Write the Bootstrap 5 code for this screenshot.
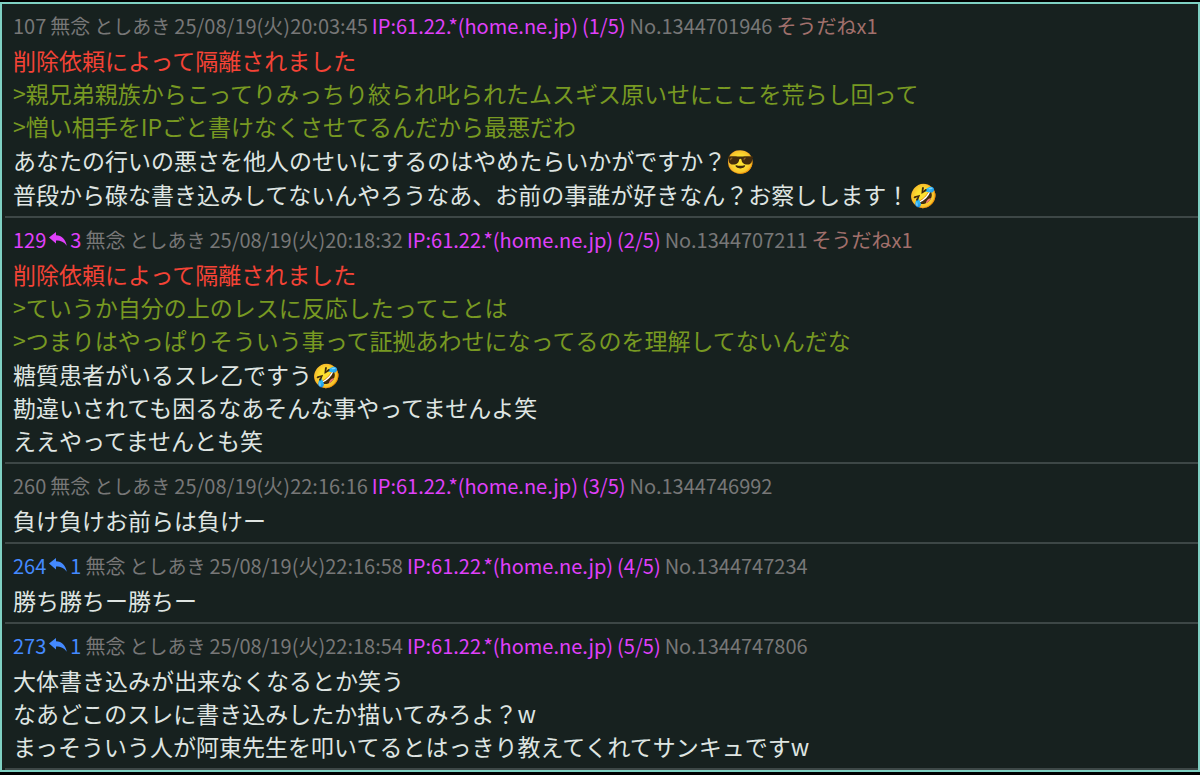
<!DOCTYPE html>
<html lang="ja" data-bs-theme="dark">
<head>
<meta charset="utf-8">
<meta name="viewport" content="width=device-width, initial-scale=1">
<title>レス一覧</title>
<link href="https://cdn.jsdelivr.net/npm/bootstrap@5.3.0/dist/css/bootstrap.min.css" rel="stylesheet">
<style>
  body { background: #000; font-family: "Noto Sans CJK JP", sans-serif; }
  .popup { margin: 2px 0 0; background: #17211f; border: 2px solid #7fd1c3; }
  .post { padding: 6px 8px 5px; margin-left: 3px; border-bottom: 2px solid #3d4746; }
  .post-head { column-gap: 4px; margin-bottom: 2px; font-size: 20px; line-height: 32px; color: #777; }
  .post-head a { text-decoration: none; }
  .post-text { font-size: 23px; line-height: 33px; color: #dfe5e2; }
  .with-emoji { line-height: 34px; }
  .poster { font-size: 19px; }
  .ip { color: #e040fb; }
  .vote { color: #a1706c; }
  .res-many { color: #e040fb; }
  .res-few { color: #448aff; }
  .isolated { color: #f44336; }
  .quote { color: #789922; }
  .reply-icon { width: 18px; height: 14px; margin: 0 3px 2px; }
</style>
</head>
<body>
<svg class="d-none" aria-hidden="true">
  <symbol id="reply" viewBox="0 0 18 14"><path fill="currentColor" d="M0 5.600 7 0V3.200C13 3.400 16.600 7.200 17.800 13.800 15 10 12 8.600 7 8.600V11.600Z"/></symbol>
</svg>
<main class="popup">
  <article class="post">
    <header class="post-head d-flex flex-wrap">
      <span>107</span><span>無念</span><span class="poster">としあき</span><span>25/08/19(火)20:03:45</span><span class="ip">IP:61.22.*(home.ne.jp)</span><span class="ip">(1/5)</span><span>No.1344701946</span><a class="vote" href="#">そうだねx1</a>
    </header>
    <div class="post-text">
      <div class="isolated">削除依頼によって隔離されました</div>
      <div class="quote">&gt;親兄弟親族からこってりみっちり絞られ叱られたムスギス原いせにここを荒らし回って</div>
      <div class="quote">&gt;憎い相手をIPごと書けなくさせてるんだから最悪だわ</div>
      <div class="with-emoji">あなたの行いの悪さを他人のせいにするのはやめたらいかがですか？😎</div>
      <div class="with-emoji">普段から碌な書き込みしてないんやろうなあ、お前の事誰が好きなん？お察しします！🤣</div>
    </div>
  </article>
  <article class="post">
    <header class="post-head d-flex flex-wrap">
      <a class="res-many d-flex align-items-center" href="#">129<svg class="reply-icon" aria-hidden="true"><use href="#reply"/></svg>3</a><span>無念</span><span class="poster">としあき</span><span>25/08/19(火)20:18:32</span><span class="ip">IP:61.22.*(home.ne.jp)</span><span class="ip">(2/5)</span><span>No.1344707211</span><a class="vote" href="#">そうだねx1</a>
    </header>
    <div class="post-text">
      <div class="isolated">削除依頼によって隔離されました</div>
      <div class="quote">&gt;ていうか自分の上のレスに反応したってことは</div>
      <div class="quote">&gt;つまりはやっぱりそういう事って証拠あわせになってるのを理解してないんだな</div>
      <div class="with-emoji">糖質患者がいるスレ乙ですう🤣</div>
      <div>勘違いされても困るなあそんな事やってませんよ笑</div>
      <div>ええやってませんとも笑</div>
    </div>
  </article>
  <article class="post">
    <header class="post-head d-flex flex-wrap">
      <span>260</span><span>無念</span><span class="poster">としあき</span><span>25/08/19(火)22:16:16</span><span class="ip">IP:61.22.*(home.ne.jp)</span><span class="ip">(3/5)</span><span>No.1344746992</span>
    </header>
    <div class="post-text">
      <div>負け負けお前らは負けー</div>
    </div>
  </article>
  <article class="post">
    <header class="post-head d-flex flex-wrap">
      <a class="res-few d-flex align-items-center" href="#">264<svg class="reply-icon" aria-hidden="true"><use href="#reply"/></svg>1</a><span>無念</span><span class="poster">としあき</span><span>25/08/19(火)22:16:58</span><span class="ip">IP:61.22.*(home.ne.jp)</span><span class="ip">(4/5)</span><span>No.1344747234</span>
    </header>
    <div class="post-text">
      <div>勝ち勝ちー勝ちー</div>
    </div>
  </article>
  <article class="post">
    <header class="post-head d-flex flex-wrap">
      <a class="res-few d-flex align-items-center" href="#">273<svg class="reply-icon" aria-hidden="true"><use href="#reply"/></svg>1</a><span>無念</span><span class="poster">としあき</span><span>25/08/19(火)22:18:54</span><span class="ip">IP:61.22.*(home.ne.jp)</span><span class="ip">(5/5)</span><span>No.1344747806</span>
    </header>
    <div class="post-text">
      <div>大体書き込みが出来なくなるとか笑う</div>
      <div>なあどこのスレに書き込みしたか描いてみろよ？w</div>
      <div>まっそういう人が阿東先生を叩いてるとはっきり教えてくれてサンキュですw</div>
    </div>
  </article>
</main>
<script src="https://cdn.jsdelivr.net/npm/bootstrap@5.3.0/dist/js/bootstrap.bundle.min.js"></script>
</body>
</html>
